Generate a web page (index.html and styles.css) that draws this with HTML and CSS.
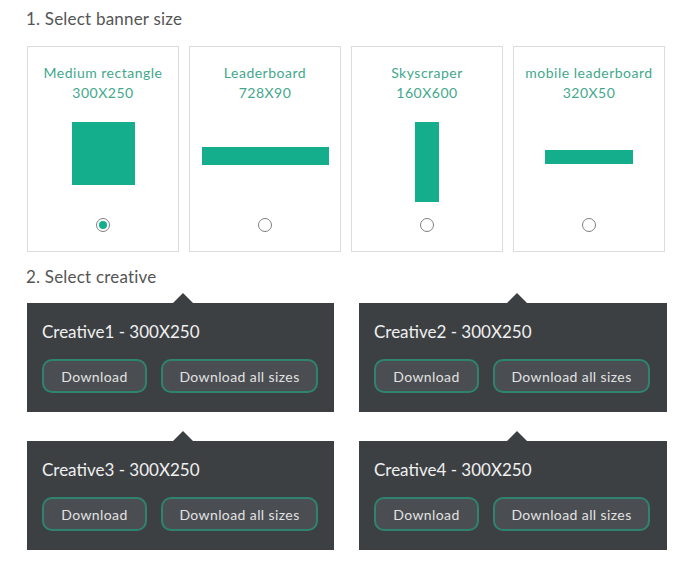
FILE: index.html
```html
<!DOCTYPE html>
<html>
<head>
<meta charset="utf-8">
<link rel="stylesheet" href="styles.css">
</head>
<body>
<div class="page">
  <h2 class="step">1. Select banner size</h2>
  <div class="sizes">
    <div class="card">
      <div class="card-title">Medium rectangle<br>300X250</div>
      <div class="shape-area"><div class="shape shape-mr"></div></div>
      <span class="radio checked"></span>
    </div>
    <div class="card">
      <div class="card-title">Leaderboard<br>728X90</div>
      <div class="shape-area"><div class="shape shape-lb"></div></div>
      <span class="radio"></span>
    </div>
    <div class="card">
      <div class="card-title">Skyscraper<br>160X600</div>
      <div class="shape-area"><div class="shape shape-sk"></div></div>
      <span class="radio"></span>
    </div>
    <div class="card">
      <div class="card-title">mobile leaderboard<br>320X50</div>
      <div class="shape-area"><div class="shape shape-ml"></div></div>
      <span class="radio"></span>
    </div>
  </div>

  <h2 class="step step-2">2. Select creative</h2>
  <div class="creatives">
    <div class="panel">
      <div class="panel-title">Creative1 - 300X250</div>
      <div class="actions">
        <button class="btn btn-one">Download</button>
        <button class="btn btn-all">Download all sizes</button>
      </div>
    </div>
    <div class="panel">
      <div class="panel-title">Creative2 - 300X250</div>
      <div class="actions">
        <button class="btn btn-one">Download</button>
        <button class="btn btn-all">Download all sizes</button>
      </div>
    </div>
    <div class="panel">
      <div class="panel-title">Creative3 - 300X250</div>
      <div class="actions">
        <button class="btn btn-one">Download</button>
        <button class="btn btn-all">Download all sizes</button>
      </div>
    </div>
    <div class="panel">
      <div class="panel-title">Creative4 - 300X250</div>
      <div class="actions">
        <button class="btn btn-one">Download</button>
        <button class="btn btn-all">Download all sizes</button>
      </div>
    </div>
  </div>
</div>
</body>
</html>
```

FILE: styles.css
```css
* { box-sizing: border-box; }
html, body { margin: 0; padding: 0; background: #fff; }
body {
  font-family: Lato, "Open Sans", sans-serif;
  color: #555;
}
.page {
  width: 690px;
  padding: 9px 0 0 26px;
}
.step {
  margin: 0;
  font-size: 17px;
  font-weight: 400;
  line-height: 20px;
  letter-spacing: 0.2px;
  color: #555;
}
.sizes {
  display: flex;
  gap: 10px;
  margin-top: 17px;
  padding-left: 1px;
}
.card {
  width: 152px;
  height: 206px;
  border: 1px solid #dcdcdc;
  display: flex;
  flex-direction: column;
  align-items: center;
  padding-top: 16px;
}
.card-title {
  color: #42a88c;
  font-size: 14px;
  line-height: 20px;
  letter-spacing: 0.5px;
  text-align: center;
}
.shape-area {
  margin-top: 19px;
  height: 80px;
  display: flex;
  justify-content: center;
  align-items: flex-start;
}
.shape { background: #14ae8c; }
.shape-mr { width: 63px; height: 63px; }
.shape-lb { width: 127px; height: 18px; margin-top: 25px; }
.shape-sk { width: 24px; height: 80px; }
.shape-ml { width: 88px; height: 14px; margin-top: 28px; }
.radio {
  margin-top: 16px;
  width: 14px;
  height: 14px;
  border-radius: 50%;
  border: 1px solid #808080;
  display: flex;
  align-items: center;
  justify-content: center;
}
.radio.checked::after {
  content: "";
  width: 8px;
  height: 8px;
  border-radius: 50%;
  background: #14ae8c;
}
.step-2 { margin-top: 15px; }
.creatives {
  display: grid;
  grid-template-columns: 307px 308px;
  column-gap: 25px;
  row-gap: 29px;
  margin-top: 16px;
  padding-left: 1px;
}
.panel {
  position: relative;
  background: #3d4043;
  height: 109px;
  padding: 18px 15px 0 15px;
}
.panel::before {
  content: "";
  position: absolute;
  top: -10px;
  left: 146px;
  border-left: 10px solid transparent;
  border-right: 10px solid transparent;
  border-bottom: 10px solid #3d4043;
}
.panel:nth-child(2n)::before { left: 148px; }
.panel-title {
  color: #f0f0f0;
  font-size: 17px;
  line-height: 22px;
}
.actions {
  display: flex;
  gap: 14px;
  margin-top: 16px;
}
.btn {
  font-family: inherit;
  font-size: 14px;
  letter-spacing: 0.4px;
  color: #e2e2e2;
  background: #4a4d51;
  border: 2px solid #2e8470;
  border-radius: 10px;
  height: 34px;
  padding: 0;
}
.btn-one { width: 105px; }
.btn-all { width: 157px; }
```
